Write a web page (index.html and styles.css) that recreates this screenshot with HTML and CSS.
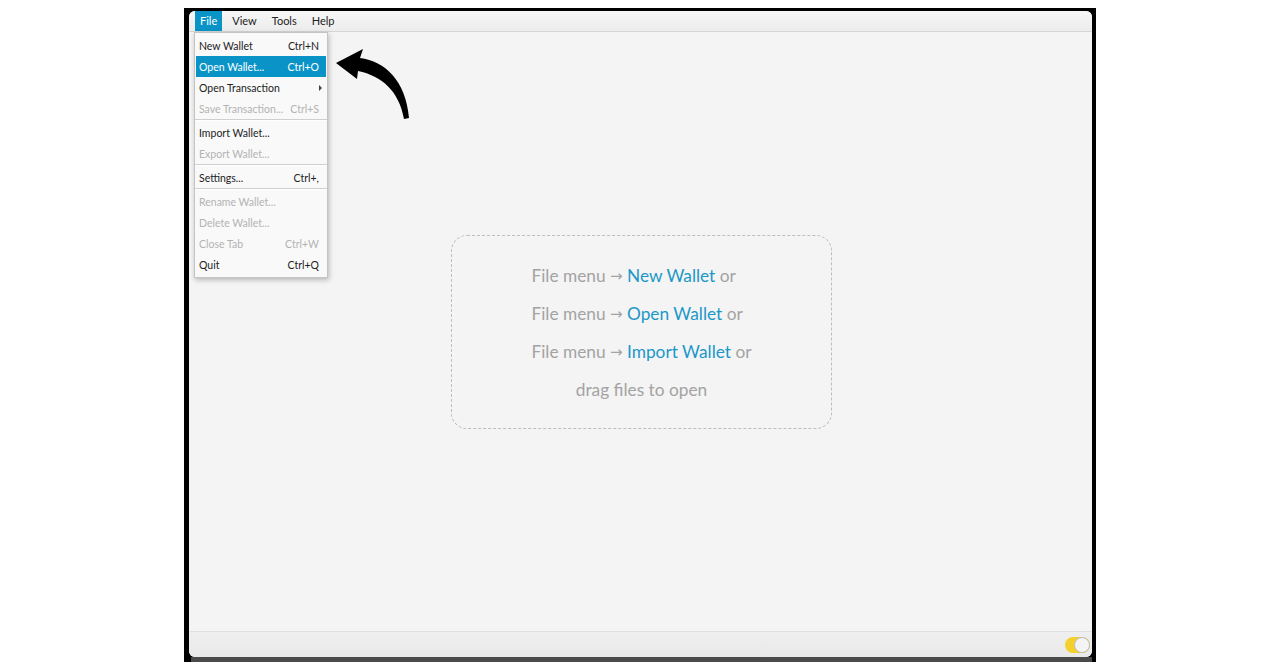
FILE: index.html
```html
<!DOCTYPE html>
<html>
<head>
<meta charset="utf-8">
<link rel="stylesheet" href="styles.css">
</head>
<body>
<div class="stage">
  <div class="frame">
    <div class="window">
      <div class="menubar">
        <div class="mb-item active">File</div>
        <div class="mb-item">View</div>
        <div class="mb-item">Tools</div>
        <div class="mb-item">Help</div>
      </div>
      <div class="content">
        <div class="dropbox">
          <div class="group">
            <div class="line">File menu <span class="arr">→</span> <span class="link">New Wallet</span> or</div>
            <div class="line">File menu <span class="arr">→</span> <span class="link">Open Wallet</span> or</div>
            <div class="line">File menu <span class="arr">→</span> <span class="link">Import Wallet</span> or</div>
          </div>
          <div class="line">drag files to open</div>
        </div>
      </div>
      <div class="statusbar">
        <div class="toggle"><div class="knob"></div></div>
      </div>
      <div class="menu">
        <div class="mi"><span>New Wallet</span><span>Ctrl+N</span></div>
        <div class="mi sel"><span>Open Wallet...</span><span>Ctrl+O</span></div>
        <div class="mi"><span>Open Transaction</span><span class="sub"></span></div>
        <div class="mi dis"><span>Save Transaction...</span><span>Ctrl+S</span></div>
        <div class="sep"></div>
        <div class="mi"><span>Import Wallet...</span><span></span></div>
        <div class="mi dis"><span>Export Wallet...</span><span></span></div>
        <div class="sep"></div>
        <div class="mi"><span>Settings...</span><span>Ctrl+,</span></div>
        <div class="sep"></div>
        <div class="mi dis"><span>Rename Wallet...</span><span></span></div>
        <div class="mi dis"><span>Delete Wallet...</span><span></span></div>
        <div class="mi dis"><span>Close Tab</span><span>Ctrl+W</span></div>
        <div class="mi"><span>Quit</span><span>Ctrl+Q</span></div>
      </div>
    </div>
    <div class="shadow"></div>
  </div>
  <svg class="arrow" width="90" height="85" viewBox="0 0 90 85">
    <path d="M6,18 L33,4 L30,13 C55,16 76,36 79,73 L74,74 C69,46 52,31 28,26 L27,34 Z" fill="#000"/>
  </svg>
</div>
</body>
</html>
```

FILE: styles.css
```css
html, body {
  margin: 0;
  padding: 0;
  background: #ffffff;
}
.stage {
  position: relative;
  width: 1280px;
  height: 668px;
  padding: 8px 0 0 184px;
  box-sizing: border-box;
}
.frame {
  width: 912px;
  height: 654px;
  background: #000;
  padding: 3px 4px 0 5px;
  box-sizing: border-box;
}
.window {
  position: relative;
  width: 903px;
  height: 646px;
  background: #f4f4f4;
  border-radius: 6px;
  overflow: hidden;
  display: flex;
  flex-direction: column;
  font-family: "Lato", "Noto Sans", sans-serif;
}
.shadow {
  height: 5px;
  margin-left: 2px;
  background: #4a4a4a;
}
.menubar {
  height: 20px;
  display: flex;
  padding-left: 6px;
  background: linear-gradient(#f7f7f7, #ececec);
  border-bottom: 1px solid #d6d6d6;
  box-sizing: content-box;
}
.mb-item {
  font-size: 11px;
  line-height: 20px;
  padding: 0 5px;
  margin-right: 5px;
  color: #222;
}
.mb-item.active {
  background: #0a93c6;
  color: #fff;
}
.content {
  flex: 1;
  display: flex;
  align-items: center;
  justify-content: center;
}
.dropbox {
  width: 381px;
  height: 194px;
  box-sizing: border-box;
  border: 1px dashed #bdbdbd;
  border-radius: 16px;
  padding: 21px 0;
  display: flex;
  flex-direction: column;
  align-items: center;
  margin-left: 2px;
}
.group {
  display: flex;
  flex-direction: column;
  align-items: flex-start;
}
.line {
  height: 38px;
  font-size: 17.3px;
  line-height: 38px;
  color: #a3a3a3;
  white-space: nowrap;
}
.arr {
  font-family: "DejaVu Sans", sans-serif;
  font-size: 15px;
  line-height: 0;
  position: relative;
  top: -1px;
}
.link {
  color: #1b98c8;
}
.statusbar {
  height: 26px;
  box-sizing: border-box;
  border-top: 1px solid #e0e0e0;
  background: linear-gradient(#efefef, #e9e9e9);
  display: flex;
  justify-content: flex-end;
  align-items: center;
  padding-right: 2px;
}
.toggle {
  width: 25px;
  height: 16px;
  border-radius: 8px;
  background: #f3d02c;
  display: flex;
  justify-content: flex-end;
}
.knob {
  width: 14px;
  height: 14px;
  border-radius: 50%;
  background: #f4f4f4;
  border: 1px solid #bcbcbc;
}
.menu {
  position: absolute;
  left: 5px;
  top: 21px;
  width: 134px;
  box-sizing: border-box;
  background: #f9f9f9;
  border: 1px solid #c4c4c4;
  padding: 2px 0;
  box-shadow: 1px 2px 5px rgba(0,0,0,0.25);
}
.mi {
  height: 21px;
  display: flex;
  justify-content: space-between;
  align-items: center;
  padding: 0 8px 0 4px;
  font-size: 10.5px;
  color: #222;
  white-space: nowrap;
}
.mi.sel {
  background: #0a93c6;
  color: #fff;
  margin: 0 1px;
  padding: 0 7px 0 3px;
}
.mi.dis {
  color: #b3b3b3;
}
.sub {
  width: 0;
  height: 0;
  border-top: 3px solid transparent;
  border-bottom: 3px solid transparent;
  border-left: 3px solid #444;
  margin-right: -3px;
}
.sep {
  height: 1px;
  margin: 0 0 1px;
  border-top: 1px solid #cfcfcf;
  background: #fff;
}
.arrow {
  position: absolute;
  left: 330px;
  top: 45px;
}
```
